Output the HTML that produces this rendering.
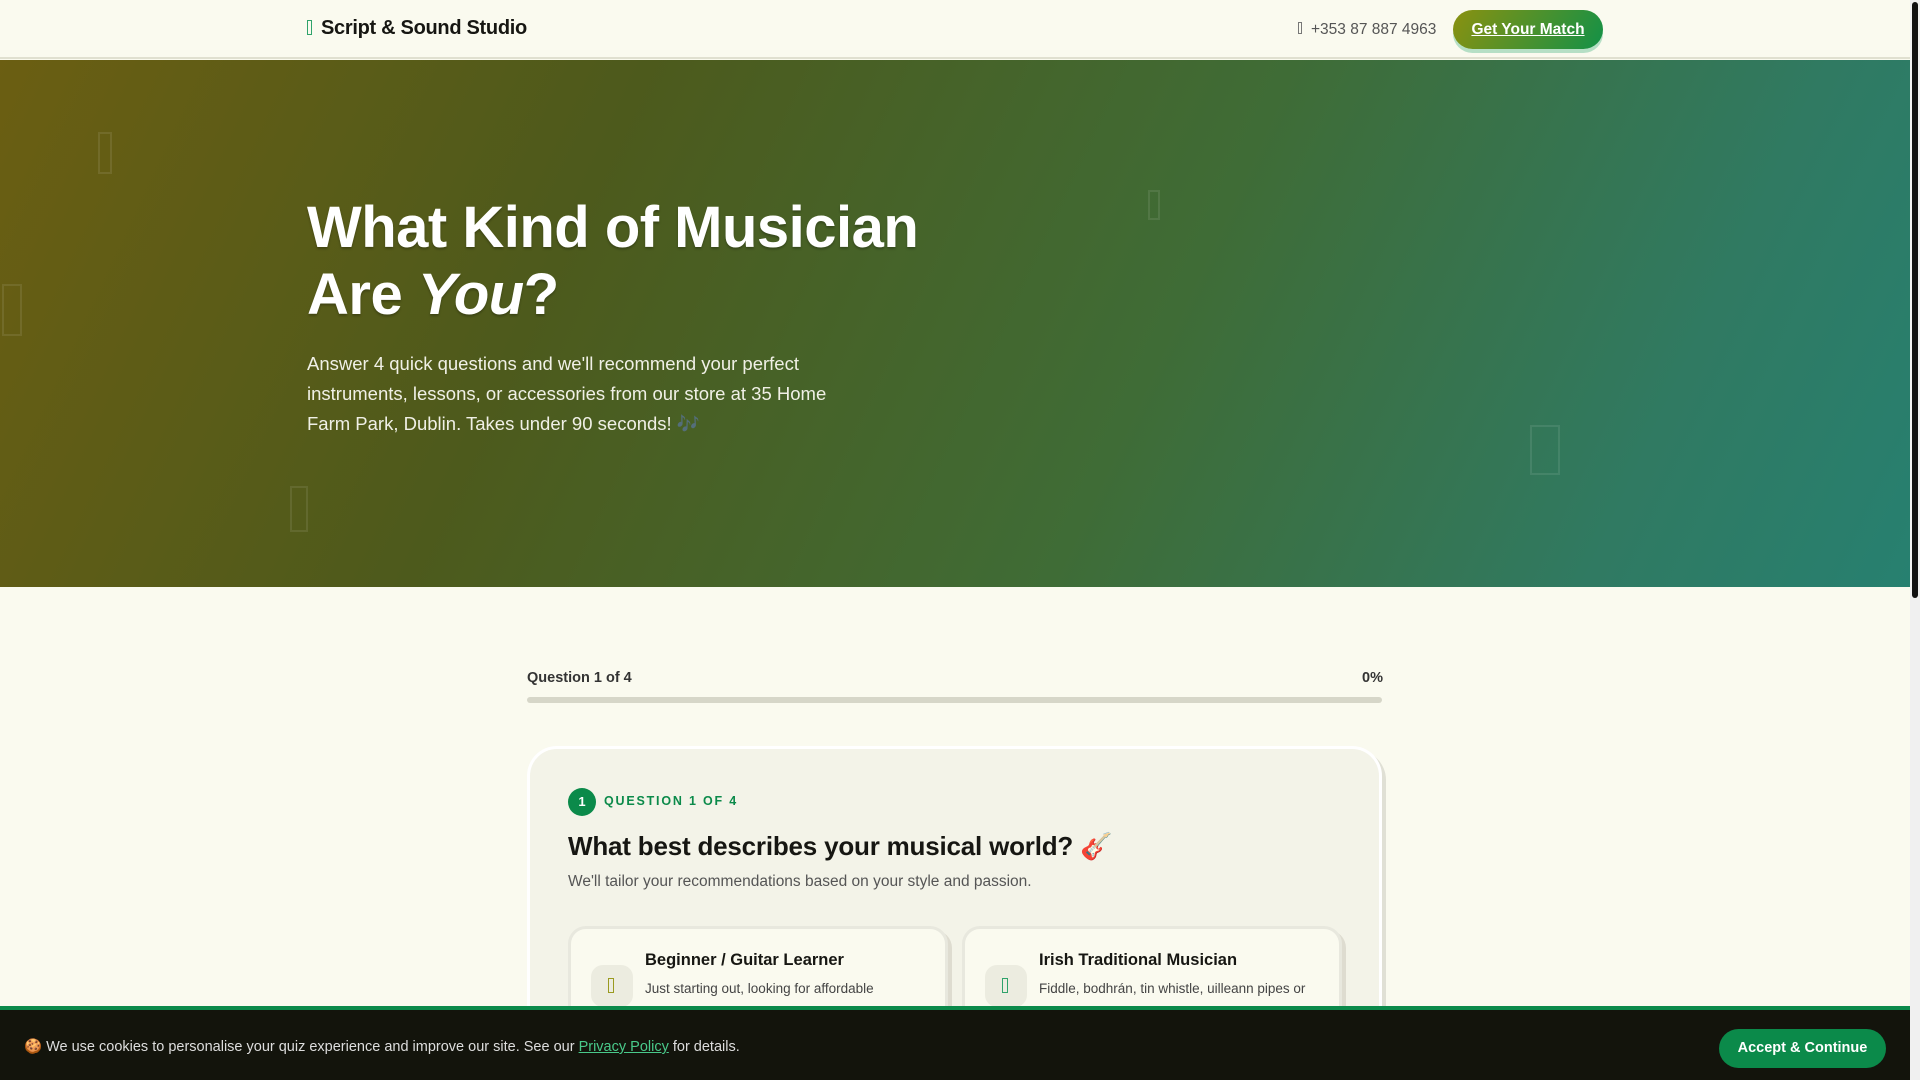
<!DOCTYPE html>
<html><head><meta charset="utf-8"><style>
*{margin:0;padding:0;box-sizing:border-box}
html,body{width:1920px;height:1080px;overflow:hidden}
body{background:#fafaef;font-family:"Liberation Sans","DejaVu Sans",sans-serif;position:relative;color:#161612}
.hdr{position:absolute;left:0;top:0;width:1910px;height:59px;background:#fafaef;border-bottom:2px solid #e0e0d0}
.logo{position:absolute;left:307px;top:17px;font-size:20px;font-weight:bold;color:#161612;letter-spacing:-0.3px}
.logo i{display:inline-block;width:5px;height:15px;border:1px solid #2fa36b;margin-right:9px;vertical-align:-1px}
.phone{position:absolute;left:1298px;top:21px;font-size:15.5px;color:#555}
.phone i{display:inline-block;width:4px;height:12px;border:1px solid #777;margin-right:9px}
.btn{position:absolute;left:1453px;top:10px;width:150px;height:39px;border-radius:20px;background:linear-gradient(120deg,#8a9110,#139147);color:#fff;font-weight:bold;font-size:15.5px;text-align:center;line-height:39px;text-decoration:underline;box-shadow:0 4px 0 #b5dfc5}
.hero{position:absolute;left:0;top:60px;width:1910px;height:527px;background:linear-gradient(115deg,#6b5e12 0%,#4d5a1c 30%,#3f6c36 60%,#307a62 85%,#278070 100%)}
.hero h1{position:absolute;left:307px;top:134px;font-size:58px;line-height:67px;color:#fff;font-weight:bold;text-shadow:0 2px 2px rgba(0,0,0,.25);letter-spacing:-0.5px}
.hero p{position:absolute;left:307px;top:289px;width:560px;font-size:18.5px;line-height:30px;color:#f0f0e6}
.deco{position:absolute;border:2px solid rgba(255,255,255,.09);width:14px;height:42px}
.sb{position:absolute;left:1910px;top:0;width:10px;height:1080px;background:#f0f0f0}
.sb div{position:absolute;left:2px;top:2px;width:6px;height:596px;background:#111;border-radius:3px}
.ql{position:absolute;left:527px;top:670px;font-size:14.5px;font-weight:bold;color:#333}
.qr{position:absolute;left:1362px;top:670px;font-size:14.5px;font-weight:bold;color:#333}
.bar{position:absolute;left:527px;top:697px;width:855px;height:6px;border-radius:3px;background:#d6d6c8}
.card{position:absolute;left:527px;top:746px;width:855px;height:334px;border-radius:30px 30px 0 0;background:#f3f3e8;border:3px solid #fff;border-bottom:none;box-shadow:4px 4px 0 #e0e0d5}
.badge{position:absolute;left:568px;top:788px;width:28px;height:28px;border-radius:50%;background:#0b8a4a;color:#fff;font-size:13px;text-align:center;line-height:28px;font-weight:bold}
.qtag{position:absolute;left:604px;top:794px;font-size:12.5px;font-weight:bold;color:#0b8a4a;letter-spacing:1.8px}
.qh{position:absolute;left:568px;top:831px;font-size:26px;font-weight:bold;letter-spacing:-0.2px}
.qs{position:absolute;left:568px;top:873px;font-size:15.5px;color:#555}
.opt{position:absolute;top:926px;width:380px;height:140px;border-radius:18px;background:#fafaef;border:3px solid #e8e8de;box-shadow:4px 4px 0 #dedcd0}
.opt .ic{position:absolute;left:20px;top:36px;width:42px;height:42px;border-radius:12px;background:#ecece0}
.opt .ic i{position:absolute;left:17px;top:13px;width:6px;height:15px;border:1px solid}
.opt b{position:absolute;left:74px;top:22px;font-size:16.5px}
.opt span{position:absolute;left:74px;top:52px;font-size:13.5px;color:#444}
.ck{position:absolute;left:0;top:1006px;width:1910px;height:74px;background:#13140c;border-top:4px solid #0b8a4a}
.ck p{position:absolute;left:24px;top:28px;font-size:14.5px;color:#ddd}
.ck a{color:#49c98a}
.ck .ac{position:absolute;left:1719px;top:19px;width:167px;height:39px;border-radius:20px;background:#0b8a4a;color:#fff;font-weight:bold;font-size:14.5px;text-align:center;line-height:39px}
</style></head><body>
<div class="hdr"><div class="logo"><i></i>Script &amp; Sound Studio</div>
<div class="phone"><i></i>+353 87 887 4963</div>
<div class="btn">Get Your Match</div></div>
<div class="hero">
<div class="deco" style="left:98px;top:72px"></div>
<div class="deco" style="left:2px;top:224px;width:20px;height:52px"></div>
<div class="deco" style="left:290px;top:426px;width:18px;height:46px"></div>
<div class="deco" style="left:1148px;top:130px;width:12px;height:30px"></div>
<div class="deco" style="left:1530px;top:365px;width:30px;height:50px"></div>
<h1>What Kind of Musician<br>Are <i>You</i>?</h1>
<p>Answer 4 quick questions and we'll recommend your perfect instruments, lessons, or accessories from our store at 35 Home Farm Park, Dublin. Takes under 90 seconds! 🎶</p>
</div>
<div class="ql">Question 1 of 4</div><div class="qr">0%</div>
<div class="bar"></div>
<div class="card"></div>
<div class="badge">1</div><div class="qtag">QUESTION 1 OF 4</div>
<div class="qh">What best describes your musical world? 🎸</div>
<div class="qs">We'll tailor your recommendations based on your style and passion.</div>
<div class="opt" style="left:568px"><div class="ic"><i style="border-color:#9a9a20"></i></div><b>Beginner / Guitar Learner</b><span>Just starting out, looking for affordable</span></div>
<div class="opt" style="left:962px"><div class="ic"><i style="border-color:#2fa36b"></i></div><b>Irish Traditional Musician</b><span>Fiddle, bodhrán, tin whistle, uilleann pipes or</span></div>
<div class="ck"><p>🍪 We use cookies to personalise your quiz experience and improve our site. See our <a href="#">Privacy Policy</a> for details.</p><div class="ac">Accept &amp; Continue</div></div>
<div class="sb"><div></div></div>
</body></html>
